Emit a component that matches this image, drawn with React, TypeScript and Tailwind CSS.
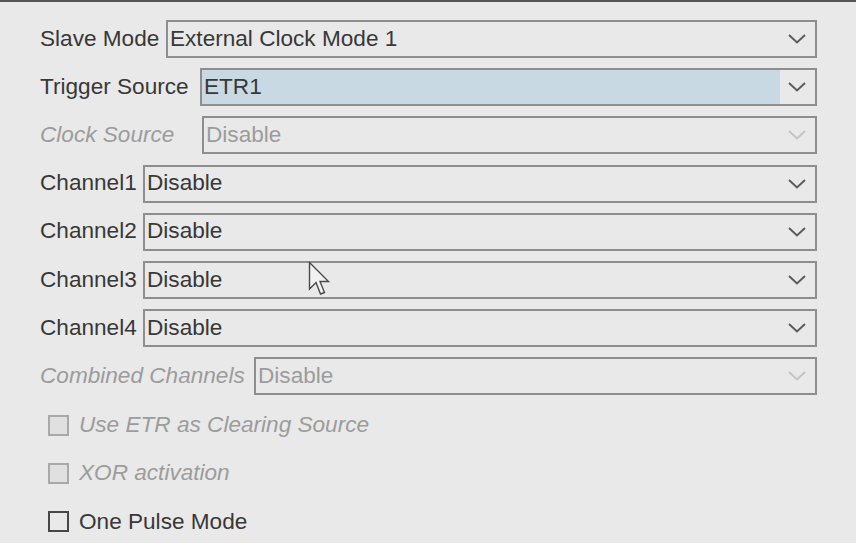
import React from "react";

type Row = {
  label: string;
  value: string;
  labelW: string;
  disabled?: boolean;
  highlight?: boolean;
};

const rows: Row[] = [
  { label: "Slave Mode", value: "External Clock Mode 1", labelW: "w-[126px]" },
  { label: "Trigger Source", value: "ETR1", labelW: "w-[160px]", highlight: true },
  { label: "Clock Source", value: "Disable", labelW: "w-[162px]", disabled: true },
  { label: "Channel1", value: "Disable", labelW: "w-[103px]" },
  { label: "Channel2", value: "Disable", labelW: "w-[103px]" },
  { label: "Channel3", value: "Disable", labelW: "w-[103px]" },
  { label: "Channel4", value: "Disable", labelW: "w-[103px]" },
  { label: "Combined Channels", value: "Disable", labelW: "w-[214px]", disabled: true },
];

const checks = [
  { label: "Use ETR as Clearing Source", disabled: true },
  { label: "XOR activation", disabled: true },
  { label: "One Pulse Mode", disabled: false },
];

function Chevron({ disabled }: { disabled?: boolean }) {
  return (
    <svg width="18" height="10" viewBox="0 0 18 10" className="shrink-0">
      <path
        d="M1 1 L9 8.5 L17 1"
        fill="none"
        stroke={disabled ? "#c4c4c4" : "#5a5a5a"}
        strokeWidth="2"
      />
    </svg>
  );
}

export default function App() {
  return (
    <div
      className="relative w-[856px] h-[543px] overflow-hidden bg-[#e9e9e9] border-t-2 border-[#565656]"
      style={{ fontFamily: '"Liberation Sans", Arial, sans-serif' }}
    >
      <div className="flex flex-col gap-[10.2px] pl-[40px] pr-[39px] pt-[18px]">
        {rows.map((r) => (
          <div key={r.label} className="flex items-center h-[38px]">
            <span
              className={`${r.labelW} shrink-0 text-[22.6px] leading-none ${
                r.disabled ? "italic text-[#9c9c9c]" : "text-[#383838]"
              }`}
            >
              {r.label}
            </span>
            <div className="flex-1 flex items-stretch h-full border-2 border-[#8e8e8e]">
              <div
                className={`flex-1 flex items-center pl-[2px] text-[22.6px] leading-none ${
                  r.highlight ? "bg-[#c9d9e4]" : ""
                } ${r.disabled ? "text-[#9c9c9c]" : "text-[#383838]"}`}
              >
                {r.value}
              </div>
              <div className="w-[35px] flex items-center justify-center pr-[1px]">
                <Chevron disabled={r.disabled} />
              </div>
            </div>
          </div>
        ))}
        {checks.map((c) => (
          <div key={c.label} className="flex items-center h-[38px] pl-[8px] gap-[10px] pt-[2px]">
            <span
              className={`w-[21px] h-[21px] border-2 ${
                c.disabled ? "border-[#a9a9a9] bg-[#e0e0e0]" : "border-[#474747]"
              }`}
            />
            <span
              className={`text-[22.6px] leading-none ${
                c.disabled ? "italic text-[#9c9c9c]" : "text-[#383838]"
              }`}
            >
              {c.label}
            </span>
          </div>
        ))}
      </div>

      {/* mouse pointer */}
      <svg
        className="absolute left-[308px] top-[259px]"
        width="24"
        height="36"
        viewBox="0 0 24 36"
      >
        <path
          d="M1.5 1.5 L1.5 28 L8 21.5 L12.5 33 L16.5 31.5 L12 20.5 L20.5 20.5 Z"
          fill="#f2f2f2"
          stroke="#4a4a4a"
          strokeWidth="1.4"
          strokeLinejoin="miter"
        />
      </svg>
    </div>
  );
}
